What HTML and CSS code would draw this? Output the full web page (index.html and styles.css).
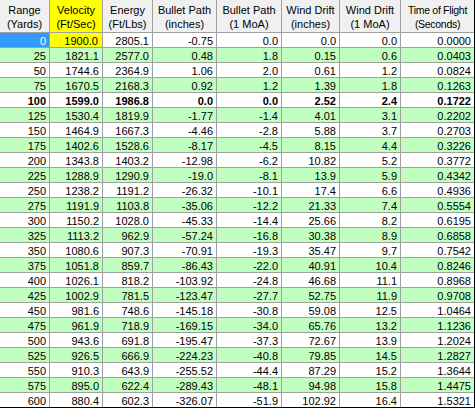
FILE: index.html
```html
<!DOCTYPE html>
<html>
<head>
<meta charset="utf-8">
<link rel="stylesheet" href="styles.css">
</head>
<body>
<div class="grid">
  <div class="hd">Range<br>(Yards)</div>
  <div class="hd sel">Velocity<br>(Ft/Sec)</div>
  <div class="hd">Energy<br>(Ft/Lbs)</div>
  <div class="hd">Bullet Path<br>(inches)</div>
  <div class="hd">Bullet Path<br>(1 MoA)</div>
  <div class="hd">Wind Drift<br>(inches)</div>
  <div class="hd">Wind Drift<br>(1 MoA)</div>
  <div class="hd tight">Time of Flight<br>(Seconds)</div>

  <div class="row"><div class="cur">0</div><div class="ycell">1900.0</div><div>2805.1</div><div>-0.75</div><div>0.0</div><div>0.0</div><div>0.0</div><div>0.0000</div></div>
  <div class="row alt"><div>25</div><div>1821.1</div><div>2577.0</div><div>0.48</div><div>1.8</div><div>0.15</div><div>0.6</div><div>0.0403</div></div>
  <div class="row"><div>50</div><div>1744.6</div><div>2364.9</div><div>1.06</div><div>2.0</div><div>0.61</div><div>1.2</div><div>0.0824</div></div>
  <div class="row alt"><div>75</div><div>1670.5</div><div>2168.3</div><div>0.92</div><div>1.2</div><div>1.39</div><div>1.8</div><div>0.1263</div></div>
  <div class="row zero"><div>100</div><div>1599.0</div><div>1986.8</div><div>0.0</div><div>0.0</div><div>2.52</div><div>2.4</div><div>0.1722</div></div>
  <div class="row alt"><div>125</div><div>1530.4</div><div>1819.9</div><div>-1.77</div><div>-1.4</div><div>4.01</div><div>3.1</div><div>0.2202</div></div>
  <div class="row"><div>150</div><div>1464.9</div><div>1667.3</div><div>-4.46</div><div>-2.8</div><div>5.88</div><div>3.7</div><div>0.2703</div></div>
  <div class="row alt"><div>175</div><div>1402.6</div><div>1528.6</div><div>-8.17</div><div>-4.5</div><div>8.15</div><div>4.4</div><div>0.3226</div></div>
  <div class="row"><div>200</div><div>1343.8</div><div>1403.2</div><div>-12.98</div><div>-6.2</div><div>10.82</div><div>5.2</div><div>0.3772</div></div>
  <div class="row alt"><div>225</div><div>1288.9</div><div>1290.9</div><div>-19.0</div><div>-8.1</div><div>13.9</div><div>5.9</div><div>0.4342</div></div>
  <div class="row"><div>250</div><div>1238.2</div><div>1191.2</div><div>-26.32</div><div>-10.1</div><div>17.4</div><div>6.6</div><div>0.4936</div></div>
  <div class="row alt"><div>275</div><div>1191.9</div><div>1103.8</div><div>-35.06</div><div>-12.2</div><div>21.33</div><div>7.4</div><div>0.5554</div></div>
  <div class="row"><div>300</div><div>1150.2</div><div>1028.0</div><div>-45.33</div><div>-14.4</div><div>25.66</div><div>8.2</div><div>0.6195</div></div>
  <div class="row alt"><div>325</div><div>1113.2</div><div>962.9</div><div>-57.24</div><div>-16.8</div><div>30.38</div><div>8.9</div><div>0.6858</div></div>
  <div class="row"><div>350</div><div>1080.6</div><div>907.3</div><div>-70.91</div><div>-19.3</div><div>35.47</div><div>9.7</div><div>0.7542</div></div>
  <div class="row alt"><div>375</div><div>1051.8</div><div>859.7</div><div>-86.43</div><div>-22.0</div><div>40.91</div><div>10.4</div><div>0.8246</div></div>
  <div class="row"><div>400</div><div>1026.1</div><div>818.2</div><div>-103.92</div><div>-24.8</div><div>46.68</div><div>11.1</div><div>0.8968</div></div>
  <div class="row alt"><div>425</div><div>1002.9</div><div>781.5</div><div>-123.47</div><div>-27.7</div><div>52.75</div><div>11.9</div><div>0.9708</div></div>
  <div class="row"><div>450</div><div>981.6</div><div>748.6</div><div>-145.18</div><div>-30.8</div><div>59.08</div><div>12.5</div><div>1.0464</div></div>
  <div class="row alt"><div>475</div><div>961.9</div><div>718.9</div><div>-169.15</div><div>-34.0</div><div>65.76</div><div>13.2</div><div>1.1236</div></div>
  <div class="row"><div>500</div><div>943.6</div><div>691.8</div><div>-195.47</div><div>-37.3</div><div>72.67</div><div>13.9</div><div>1.2024</div></div>
  <div class="row alt"><div>525</div><div>926.5</div><div>666.9</div><div>-224.23</div><div>-40.8</div><div>79.85</div><div>14.5</div><div>1.2827</div></div>
  <div class="row"><div>550</div><div>910.3</div><div>643.9</div><div>-255.52</div><div>-44.4</div><div>87.29</div><div>15.2</div><div>1.3644</div></div>
  <div class="row alt"><div>575</div><div>895.0</div><div>622.4</div><div>-289.43</div><div>-48.1</div><div>94.98</div><div>15.8</div><div>1.4475</div></div>
  <div class="row"><div>600</div><div>880.4</div><div>602.3</div><div>-326.07</div><div>-51.9</div><div>102.92</div><div>16.4</div><div>1.5321</div></div>
</div>
</body>
</html>
```
FILE: styles.css
```css
html, body {
  margin: 0;
  padding: 0;
  background: #ffffff;
}
body {
  font-family: "Liberation Sans", Arial, sans-serif;
  font-size: 11px;
  color: #000000;
}
.grid {
  display: grid;
  grid-template-columns: 49px 52px 49px 63px 64px 57px 60px 73px;
  grid-template-rows: 32px;
  grid-auto-rows: 14px;
  gap: 1px;
  width: 474px;
  background: #a0a0a0;
  border-right: 1px solid #000000;
  border-bottom: 1px solid #000000;
}
.hd {
  background: #f0f0f0;
  text-align: center;
  line-height: 14px;
  padding-top: 3px;
  box-sizing: border-box;
  white-space: nowrap;
  min-width: 0;
}
.hd.tight {
  font-size: 10.5px;
  letter-spacing: -0.3px;
}
.hd.sel {
  background: #ffff00;
}
.row {
  display: contents;
}
.row > div {
  background: #ffffff;
  text-align: right;
  padding: 1px 3px 0 0;
  line-height: 14px;
  height: 14px;
  box-sizing: border-box;
  white-space: nowrap;
  overflow: hidden;
}
.row.alt > div {
  background: #c0ffc0;
}
.row.zero > div {
  font-weight: bold;
}
.row > div.cur {
  background: #3399ff;
  color: #ffffff;
}
.row > div.ycell {
  background: #ffff00;
  padding-right: 4px;
}
```
